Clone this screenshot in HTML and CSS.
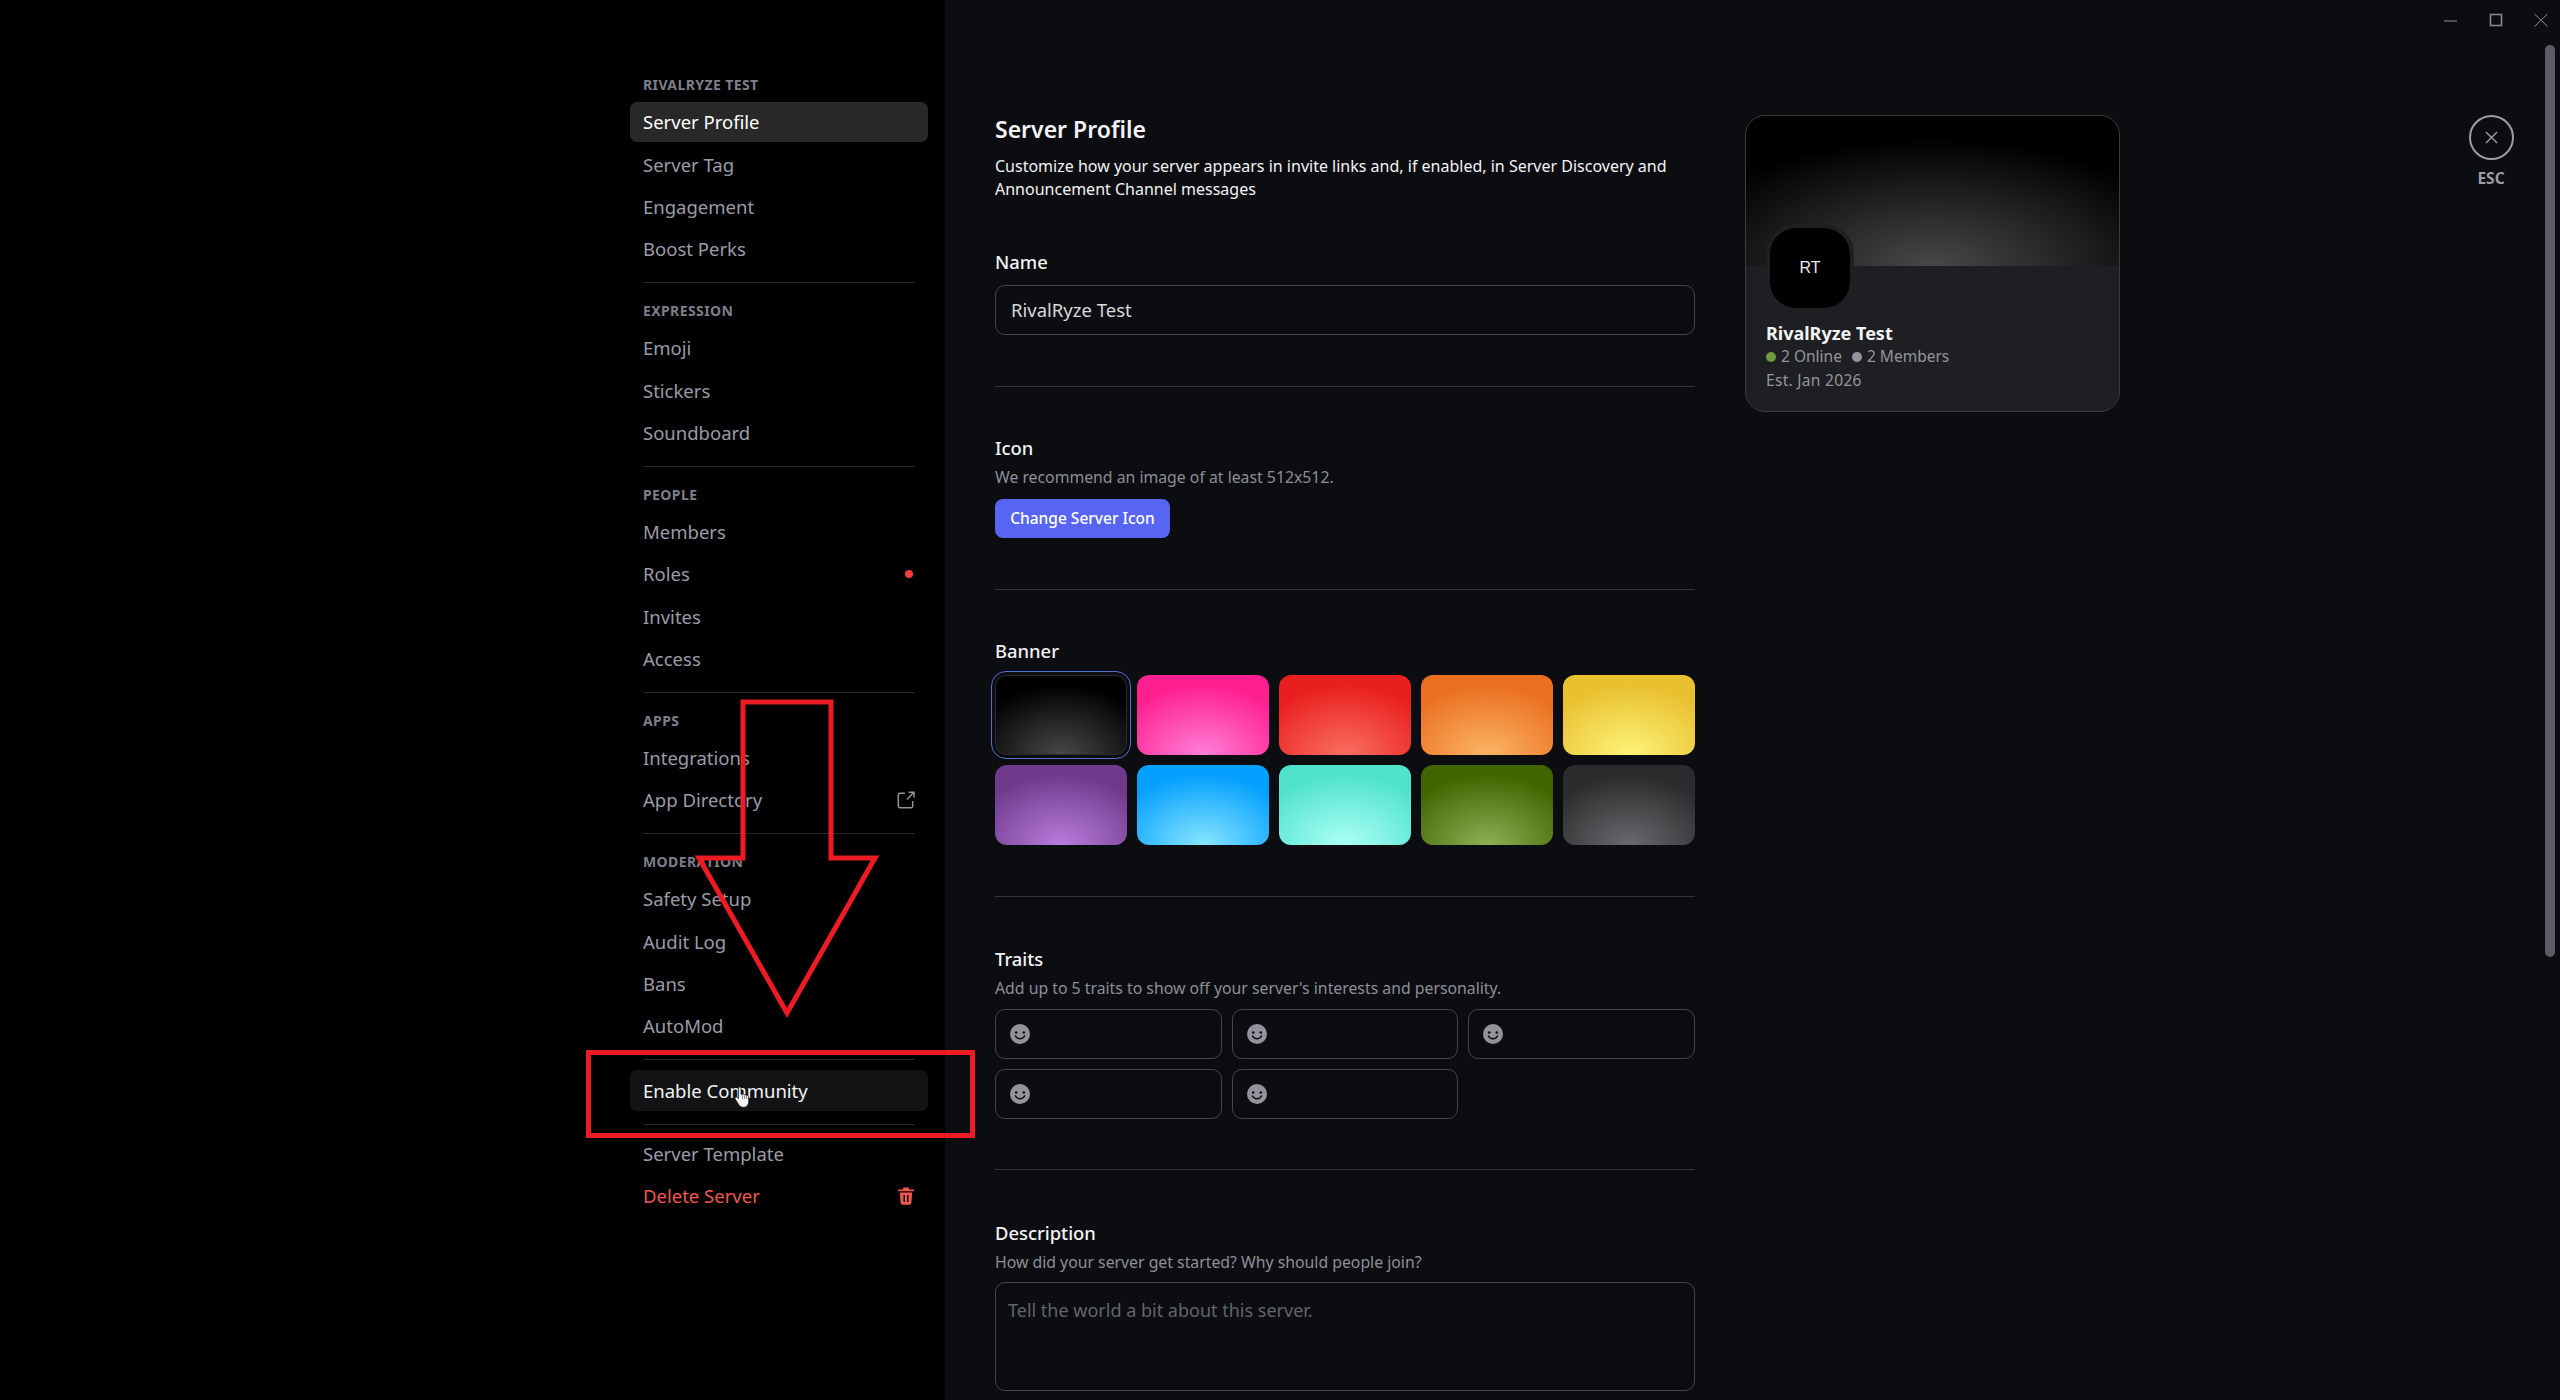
FILE: index.html
```html
<!DOCTYPE html>
<html>
  <head>
    <meta charset="utf-8"/>
    <title>Server Settings</title>
    <link rel="stylesheet" href="styles.css">
  </head>
  <body>
    <div class="app">
      <nav class="sidebar">
        <div class="nav-group">
          <h3 class="nav-title">RIVALRYZE TEST</h3>
          <a class="nav-item nav-item--active">Server Profile</a>
          <a class="nav-item">Server Tag</a>
          <a class="nav-item">Engagement</a>
          <a class="nav-item">Boost Perks</a>
        </div>
        <div class="nav-group">
          <h3 class="nav-title">EXPRESSION</h3>
          <a class="nav-item">Emoji</a>
          <a class="nav-item">Stickers</a>
          <a class="nav-item">Soundboard</a>
        </div>
        <div class="nav-group">
          <h3 class="nav-title">PEOPLE</h3>
          <a class="nav-item">Members</a>
          <a class="nav-item">Roles<span class="red-dot"></span></a>
          <a class="nav-item">Invites</a>
          <a class="nav-item">Access</a>
        </div>
        <div class="nav-group">
          <h3 class="nav-title">APPS</h3>
          <a class="nav-item">Integrations</a>
          <a class="nav-item">App Directory
            <svg class="nav-icon" viewBox="0 0 18 18" fill="none" stroke="#8f9199" stroke-width="1.5">
              <path d="M8 2.300H3A1.700 1.700 0 0 0 1.300 4V15A1.700 1.700 0 0 0 3 16.700H14A1.700 1.700 0 0 0 15.700 15V10"/>
              <path d="M10 8.500L16.500 1.500M11.500 1.200H17V6.500"/>
            </svg>
          </a>
        </div>
        <div class="nav-group">
          <h3 class="nav-title">MODERATION</h3>
          <a class="nav-item">Safety Setup</a>
          <a class="nav-item">Audit Log</a>
          <a class="nav-item">Bans</a>
          <a class="nav-item">AutoMod</a>
        </div>
        <div class="nav-group nav-group--single">
          <a class="nav-item nav-item--hover">Enable Community</a>
        </div>
        <div class="nav-group nav-group--last">
          <a class="nav-item">Server Template</a>
          <a class="nav-item nav-item--danger">Delete Server
            <svg class="nav-icon" viewBox="0 0 18 18" fill="#f0574e">
              <path d="M7 0.500H11A1 1 0 0 1 12 1.500V2.500H16.200A0.900 0.900 0 0 1 16.200 4.300H1.800A0.900 0.900 0 0 1 1.800 2.500H6V1.500A1 1 0 0 1 7 0.500Z"/>
              <path fill-rule="evenodd" d="M2.800 5.500H15.200L14.300 16A2 2 0 0 1 12.300 17.800H5.700A2 2 0 0 1 3.700 16ZM6.500 8V15H8V8ZM10 8V15H11.500V8Z"/>
            </svg>
          </a>
        </div>
      </nav>

      <main class="content">
        <div class="form">
          <h1 class="page-title">Server Profile</h1>
          <p class="page-desc">Customize how your server appears in invite links and, if enabled, in Server Discovery and Announcement Channel messages</p>

          <section class="section section--name">
            <label class="label">Name</label>
            <input class="text-input" type="text" value="RivalRyze Test">
          </section>

          <section class="section">
            <label class="label">Icon</label>
            <p class="hint">We recommend an image of at least 512x512.</p>
            <button class="primary-btn">Change Server Icon</button>
          </section>

          <section class="section">
            <label class="label">Banner</label>
            <div class="swatches">
              <div class="swatch swatch--black swatch--selected"></div>
              <div class="swatch swatch--pink"></div>
              <div class="swatch swatch--red"></div>
              <div class="swatch swatch--orange"></div>
              <div class="swatch swatch--yellow"></div>
              <div class="swatch swatch--purple"></div>
              <div class="swatch swatch--blue"></div>
              <div class="swatch swatch--teal"></div>
              <div class="swatch swatch--green"></div>
              <div class="swatch swatch--gray"></div>
            </div>
          </section>

          <section class="section section--traits">
            <label class="label">Traits</label>
            <p class="hint">Add up to 5 traits to show off your server's interests and personality.</p>
            <div class="traits">
              <div class="trait"><svg class="smile" viewBox="0 0 20 20"><use href="#smile"/></svg></div>
              <div class="trait"><svg class="smile" viewBox="0 0 20 20"><use href="#smile"/></svg></div>
              <div class="trait"><svg class="smile" viewBox="0 0 20 20"><use href="#smile"/></svg></div>
              <div class="trait"><svg class="smile" viewBox="0 0 20 20"><use href="#smile"/></svg></div>
              <div class="trait"><svg class="smile" viewBox="0 0 20 20"><use href="#smile"/></svg></div>
            </div>
          </section>

          <section class="section section--last">
            <label class="label">Description</label>
            <p class="hint">How did your server get started? Why should people join?</p>
            <textarea class="text-area" placeholder="Tell the world a bit about this server."></textarea>
          </section>
        </div>

        <aside class="card">
          <div class="card-banner"></div>
          <div class="card-body">
            <div class="card-avatar">RT</div>
            <div class="card-name">RivalRyze Test</div>
            <div class="card-stats">
              <span class="dot dot--green"></span>2 Online
              <span class="dot dot--gray"></span>2 Members
            </div>
            <div class="card-est">Est. Jan 2026</div>
          </div>
        </aside>
      </main>
    </div>

    <svg class="defs" width="0" height="0">
      <symbol id="smile" viewBox="0 0 20 20">
        <circle cx="10" cy="10" r="10" fill="#93949b"/>
        <circle cx="6.200" cy="8.500" r="1.300" fill="#0c0d10"/>
        <circle cx="13.800" cy="8.500" r="1.300" fill="#0c0d10"/>
        <path d="M5.500 12C7 15.500 13 15.500 14.500 12" fill="none" stroke="#0c0d10" stroke-width="1.500" stroke-linecap="round"/>
      </symbol>
    </svg>

    <!-- window chrome -->
    <svg class="win-controls" viewBox="0 0 116 16" fill="none" stroke="#8f9096">
      <path d="M3 8H16" stroke-width="1"/>
      <rect x="49.500" y="1.500" width="11" height="11" stroke-width="1.500"/>
      <path d="M93.500 1L106.500 13.500M106.500 1L93.500 13.500" stroke-width="1"/>
    </svg>
    <div class="scrollbar"></div>

    <div class="esc">
      <div class="esc-circle">
        <svg viewBox="0 0 14 14" fill="none" stroke="#9c9da3" stroke-width="1.500"><path d="M1 1L13 13M13 1L1 13"/></svg>
      </div>
      <span class="esc-text">ESC</span>
    </div>

    <!-- red markup drawn on top of the screenshot -->
    <svg class="markup" viewBox="0 0 2560 1400" fill="none" stroke="#ed1c24" stroke-width="5">
      <path d="M743 702H831V858H875L787 1013L699 858H743Z"/>
      <rect x="588.500" y="1052.500" width="384" height="83"/>
    </svg>

    <svg class="cursor" viewBox="0 0 16 22">
      <path d="M4.500 1.500C5.500 0.500 7 1 7 2.500V8.500L8.200 8C9 7.800 9.800 8 10 8.700C10.800 8.300 11.700 8.600 12 9.400C13 9.100 14.500 9.600 14.700 11V15.500C14.700 19 12.500 21.300 9.500 21.300C6.500 21.300 5 19.500 4 17.500L1 12.700C0.500 11.500 1.800 10.300 3 11.200L4.500 12.500Z" fill="#f4f4f6" stroke="#1a1a1a" stroke-width="0.800"/>
      <path d="M8.500 9V13M10.500 9.500V13M12.500 10V13" stroke="#555" stroke-width="0.700" fill="none"/>
    </svg>
  </body>
</html>
```

FILE: styles.css
```css
* {
  box-sizing: border-box;
}

html,
body {
  margin: 0;
  height: 1400px;
  overflow: hidden;
  background: #0c0d10;
}

body {
  position: relative;
  font-family: "Noto Sans", "Open Sans", sans-serif;
  color: #f2f3f5;
}

.app {
  display: flex;
  height: 1400px;
}

/* sidebar */

.sidebar {
  width: 945px;
  height: 1400px;
  flex: none;
  padding: 57.3px 30px 0 643px;
  background: #000;
}

.nav-group {
  padding: 19.7px 0 13px;
  border-bottom: 1px solid #2a2a2d;
}

.nav-group--single {
  padding: 10px 0 13px;
}

.nav-group--last {
  padding: 9px 0 0;
  border-bottom: 0;
}

.nav-title {
  margin: 0 0 9px;
  font-size: 14px;
  line-height: 16px;
  font-weight: 700;
  letter-spacing: 0.4px;
  color: #7d7f89;
}

.nav-item {
  display: flex;
  align-items: center;
  justify-content: space-between;
  height: 40.33px;
  margin: 0 -13px 2px;
  padding: 0 13px 0.5px;
  border-radius: 7px;
  font-size: 18.5px;
  color: #9a9ca6;
}

.nav-item:last-child {
  margin-bottom: 0;
}

.nav-item--active {
  background: #282828;
  color: #fff;
}

.nav-item--hover {
  background: #131315;
  color: #f2f3f5;
}

.nav-item--danger {
  color: #f0574e;
}

.nav-icon {
  width: 18px;
  height: 18px;
}

.red-dot {
  width: 8px;
  height: 8px;
  margin-right: 2px;
  border-radius: 50%;
  background: #ef3f3f;
}

/* main column */

.content {
  display: flex;
  gap: 50px;
  align-items: flex-start;
  padding: 115px 0 0 50px;
}

.form {
  width: 700px;
  flex: none;
}

.page-title {
  margin: 0;
  font-size: 23px;
  line-height: 28px;
  font-weight: 600;
}

.page-desc {
  margin: 11.5px 0 0;
  font-size: 16px;
  line-height: 23px;
}

.section {
  padding: 51px 0;
  border-bottom: 1px solid #333438;
}

.section--traits {
  padding-top: 52px;
  padding-bottom: 50.5px;
}

.section--last {
  border-bottom: 0;
  padding-top: 52.5px;
  padding-bottom: 0;
}

.label {
  display: block;
  font-size: 18.4px;
  line-height: 20px;
  font-weight: 500;
}

.hint {
  margin: 9px 0 0;
  font-size: 15.8px;
  line-height: 20px;
  color: #8d8f99;
}

.text-input {
  display: block;
  width: 100%;
  height: 50px;
  margin-top: 13px;
  padding: 0 15px;
  border: 1px solid #45464b;
  border-radius: 10px;
  background: #0c0d10;
  font: 18.5px "Noto Sans", sans-serif;
  color: #d8d9dd;
}

.primary-btn {
  display: block;
  width: 175px;
  height: 39px;
  margin-top: 12px;
  padding: 0;
  border: 0;
  border-radius: 8px;
  background: #5865f2;
  font: 500 15.5px "Noto Sans", sans-serif;
  color: #fff;
}

.swatches {
  display: grid;
  grid-template-columns: repeat(5, 1fr);
  grid-auto-rows: 80px;
  gap: 10px;
  margin-top: 14px;
}

.swatch {
  position: relative;
  border-radius: 12px;
  background: radial-gradient(ellipse 72% 88% at 50% 100%, var(--glow), var(--base));
}

.swatch--black { --base: #000; --glow: #484848; box-shadow: inset 0 0 0 1px #2c2c2f; }
.swatch--pink { --base: #ff1f8f; --glow: #ff80d8; }
.swatch--red { --base: #e91f1f; --glow: #fa7060; }
.swatch--orange { --base: #ea7020; --glow: #fcb565; }
.swatch--yellow { --base: #e9c02f; --glow: #fdf47a; }
.swatch--purple { --base: #6f3a8c; --glow: #b97ddc; }
.swatch--blue { --base: #04a0ff; --glow: #88e6ff; }
.swatch--teal { --base: #50e3cc; --glow: #adfff8; }
.swatch--green { --base: #3f6600; --glow: #8eb055; }
.swatch--gray { --base: #2b2b2d; --glow: #6a6a6e; }

.swatch--selected::after {
  content: "";
  position: absolute;
  inset: -4px;
  border: 1px solid #5272d8;
  border-radius: 15px;
}

.traits {
  display: grid;
  grid-template-columns: repeat(3, 1fr);
  grid-auto-rows: 50px;
  gap: 10px;
  margin-top: 11px;
}

.trait {
  display: flex;
  align-items: center;
  padding-left: 14px;
  border: 1px solid #45464b;
  border-radius: 10px;
}

.smile {
  width: 20px;
  height: 20px;
}

.text-area {
  display: block;
  width: 100%;
  height: 109px;
  margin-top: 10px;
  padding: 15px 12px;
  border: 1px solid #45464b;
  border-radius: 10px;
  background: #0c0d10;
  resize: none;
  font: 18px "Noto Sans", sans-serif;
}

.text-area::placeholder {
  color: #62646e;
  opacity: 1;
}

/* preview card */

.card {
  width: 375px;
  height: 297px;
  flex: none;
  overflow: hidden;
  border: 1px solid #3a3b3f;
  border-radius: 20px;
  background: #1e1f22;
}

.card-banner {
  height: 150px;
  background: radial-gradient(ellipse 72% 85% at 50% 100%, #484848, #000);
}

.card-body {
  padding: 0 20px;
}

.card-avatar {
  display: flex;
  align-items: center;
  justify-content: center;
  width: 88px;
  height: 88px;
  margin: -42px 0 0 0;
  border: 4px solid #1e1f22;
  border-radius: 30px;
  background: #000;
  background-clip: padding-box;
  font: 500 16px "Liberation Sans", sans-serif;
  color: #e8e8ea;
  position: relative;
}

.card-name {
  margin-top: 9px;
  font-size: 18px;
  line-height: 24px;
  font-weight: 700;
}

.card-stats,
.card-est {
  font-size: 15.5px;
  line-height: 23px;
  color: #94959c;
}

.card-est {
  margin-top: 1px;
  letter-spacing: 0.3px;
}

.dot {
  display: inline-block;
  width: 10px;
  height: 10px;
  margin-right: 5px;
  border-radius: 50%;
}

.dot--green { background: #6d9b3f; }

.dot--gray {
  margin-left: 6px;
  background: #94959c;
}

/* overlays */

.defs {
  position: absolute;
}

.win-controls {
  position: absolute;
  top: 13px;
  left: 2441px;
  width: 116px;
  height: 16px;
}

.scrollbar {
  position: absolute;
  top: 45px;
  left: 2545px;
  width: 10px;
  height: 912px;
  border-radius: 5px;
  background: #5c5c66;
}

.esc {
  position: absolute;
  top: 115px;
  left: 2461px;
  display: flex;
  flex-direction: column;
  align-items: center;
  width: 60px;
}

.esc-circle {
  display: flex;
  align-items: center;
  justify-content: center;
  width: 45px;
  height: 45px;
  border: 2px solid #9c9da3;
  border-radius: 50%;
}

.esc-circle svg {
  width: 13px;
  height: 13px;
}

.esc-text {
  margin-top: 9px;
  font-size: 15.5px;
  line-height: 18px;
  font-weight: 700;
  color: #9c9da3;
}

.markup {
  position: absolute;
  top: 0;
  left: 0;
  width: 2560px;
  height: 1400px;
  pointer-events: none;
}

.cursor {
  position: absolute;
  top: 1086px;
  left: 734px;
  width: 16px;
  height: 22px;
}
```
